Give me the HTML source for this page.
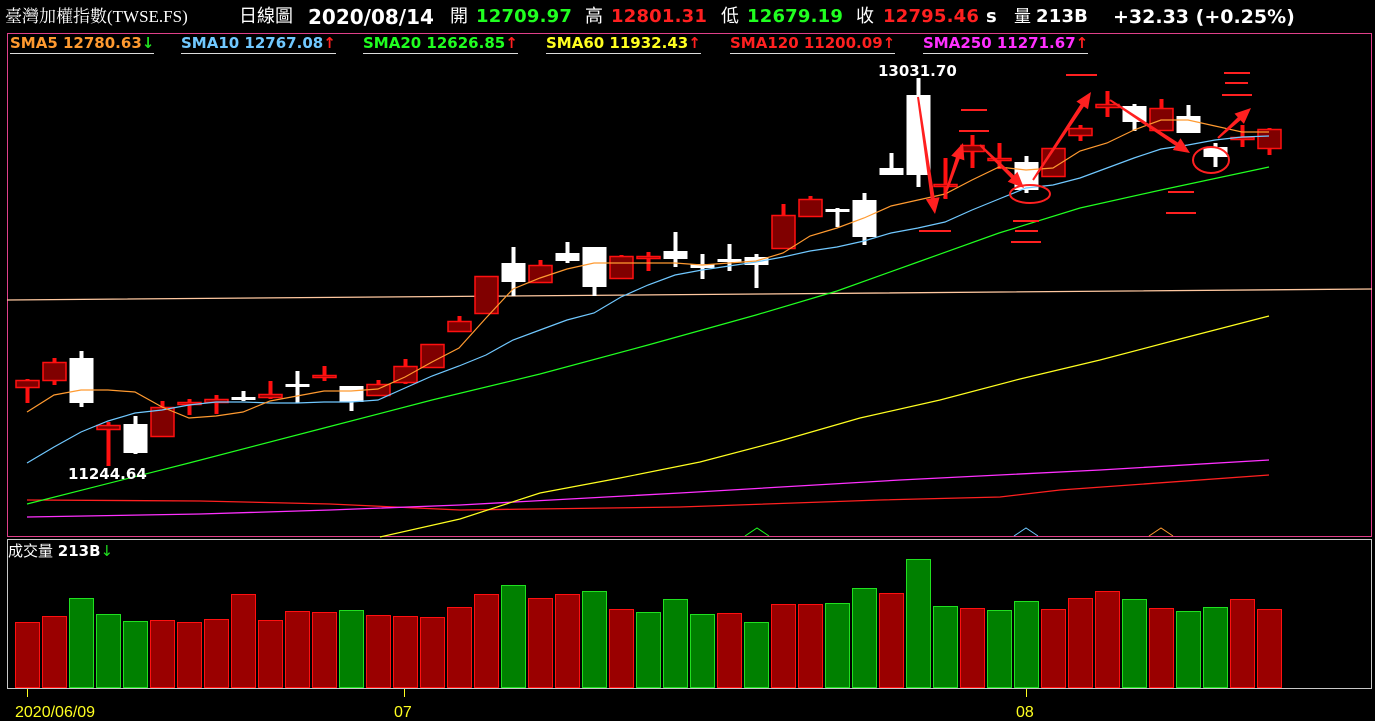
<!DOCTYPE html>
<html><head><meta charset="utf-8"><style>
html,body{margin:0;padding:0;background:#000;width:1375px;height:721px;overflow:hidden;position:relative}
#hdr{position:absolute;left:0;top:0;height:33px;width:1375px;font-family:"DejaVu Sans","Noto Sans CJK TC",sans-serif;color:#fff;z-index:2}
#hdr span{position:absolute;top:5px;font-size:18px;white-space:nowrap;line-height:24px}
.b{font-weight:bold}
.n{font-weight:bold;font-size:18px!important;letter-spacing:0.2px}
.lg{position:absolute;top:35px;font-family:"DejaVu Sans",sans-serif;font-weight:bold;font-size:15px;white-space:nowrap;padding-bottom:1px;z-index:2;line-height:17px}
svg{position:absolute;left:0;top:0;z-index:1}
</style></head><body>
<svg id="s" width="1375" height="721" xmlns="http://www.w3.org/2000/svg">
<rect x="7.5" y="33.5" width="1364" height="503" fill="none" stroke="#e0408a"/>
<rect x="7.5" y="539.5" width="1364" height="149" fill="none" stroke="#c8c8c8"/>
<polyline fill="none" stroke="#ffc8a0" stroke-width="1.3" points="7,300 380,297 760,294 1372,289"/>
<polyline fill="none" stroke="#ff2020" stroke-width="1.3" points="27,500 200,501 330,504 460,510 680,507 880,500 1000,497 1060,490 1269,475"/>
<polyline fill="none" stroke="#ff30ff" stroke-width="1.3" points="27,517 200,514 330,510 460,505 680,493 900,480 1100,470 1269,460"/>
<polyline fill="none" stroke="#ffff20" stroke-width="1.2" points="380,537 460,519 540,493 620,478 700,462 780,441 860,418 940,400 1020,379 1100,360 1180,339 1269,316"/>
<polyline fill="none" stroke="#20ff20" stroke-width="1.2" points="27,504 189,463 324,428 432,400 540,374 648,345 756,315 837,291 918,262 999,233 1080,208 1161,190 1269,167"/>
<g id="c"></g>
<polyline fill="none" stroke="#70c8ff" stroke-width="1.2" points="27,463 54,447 81,432 108,421 135,413 162,410 189,405 216,402 243,402 270,403 297,403 324,402 351,402 378,400 405,388 432,376 459,366 486,355 513,340 540,330 567,320 594,313 621,297 648,285 675,275 702,270 729,266 756,262 783,257 810,251 837,247 864,241 891,233 918,228 945,222 972,210 999,199 1026,188 1053,185 1080,178 1107,168 1134,158 1161,149 1188,145 1215,140 1242,137 1269,136"/>
<polyline fill="none" stroke="#ff9a30" stroke-width="1.2" points="27,412 54,395 81,390 108,390 135,392 162,407 189,418 216,416 243,412 270,401 297,396 324,391 351,391 378,389 405,377 432,362 459,348 486,318 513,289 540,278 567,269 594,263 621,263 648,263 675,263 702,265 729,263 756,261 783,253 810,236 837,228 864,218 891,206 918,200 945,194 972,180 999,167 1026,170 1053,168 1080,151 1107,143 1134,130 1161,120 1188,120 1215,126 1242,132 1269,132"/>
<polyline fill="none" stroke="#20ff20" points="745,536 757,528 769,536"/>
<polyline fill="none" stroke="#70c8ff" points="1014,536 1026,528 1038,536"/>
<polyline fill="none" stroke="#ff9a30" points="1149,536 1161,528 1173,536"/>
<g stroke="#ff2020" stroke-width="2">
<line x1="1066" y1="75" x2="1097" y2="75"/><line x1="961" y1="110" x2="987" y2="110"/><line x1="959" y1="131" x2="989" y2="131"/>
<line x1="919" y1="231" x2="951" y2="231"/><line x1="1013" y1="221" x2="1039" y2="221"/><line x1="1015" y1="231" x2="1038" y2="231"/><line x1="1011" y1="242" x2="1041" y2="242"/>
<line x1="1168" y1="192" x2="1194" y2="192"/><line x1="1166" y1="213" x2="1196" y2="213"/>
<line x1="1224" y1="73" x2="1250" y2="73"/><line x1="1225" y1="83" x2="1248" y2="83"/><line x1="1222" y1="95" x2="1252" y2="95"/>
</g>
<g id="ar" fill="#ff2020"></g>
<ellipse cx="1030" cy="194" rx="20" ry="9" fill="none" stroke="#ff2020" stroke-width="2"/>
<ellipse cx="1211" cy="160" rx="18" ry="13" fill="none" stroke="#ff2020" stroke-width="2"/>
<g font-family="DejaVu Sans,sans-serif" font-weight="bold" font-size="15" fill="#fff">
<text x="68" y="479">11244.64</text>
<text x="878" y="76">13031.70</text>
</g>
<text x="8" y="556" font-family="DejaVu Sans,Noto Sans CJK TC,sans-serif" font-size="15" fill="#fff">成交量 <tspan font-weight="bold">213B</tspan><tspan fill="#20e020">↓</tspan></text>
<g id="v"></g>
<g stroke="#ffff20"><line x1="27.5" y1="689" x2="27.5" y2="697"/><line x1="404.5" y1="689" x2="404.5" y2="697"/><line x1="1026.5" y1="689" x2="1026.5" y2="697"/></g>
<g font-family="Liberation Sans,sans-serif" font-size="16" fill="#ffff20">
<text x="15" y="717">2020/06/09</text><text x="394" y="717">07</text><text x="1016" y="717">08</text>
</g>
</svg>
<div id="hdr">
<span style="left:5px;font-family:'Liberation Serif','Noto Serif CJK SC',serif;font-size:17px">臺灣加權指數(TWSE.FS)</span>
<span style="left:239px">日線圖</span>
<span class="b" style="left:308px;font-size:20px">2020/08/14</span>
<span style="left:450px">開</span><span class="n" style="left:476px;color:#20ff20">12709.97</span>
<span style="left:585px">高</span><span class="n" style="left:611px;color:#ff2020">12801.31</span>
<span style="left:721px">低</span><span class="n" style="left:747px;color:#20ff20">12679.19</span>
<span style="left:856px">收</span><span class="n" style="left:883px;color:#ff2020">12795.46</span>
<span class="b" style="left:986px">s</span>
<span style="left:1014px;font-size:17px">量</span><span class="n" style="left:1036px">213B</span>
<span class="b" style="left:1113px;font-size:19px">+32.33 (+0.25%)</span>
</div>
<div class="lg" style="left:10px;color:#ff9a30;border-bottom:1px solid #ddd">SMA5 12780.63<span style="color:#20e020">↓</span></div>
<div class="lg" style="left:181px;color:#70c8ff;border-bottom:1px solid #ddd">SMA10 12767.08<span style="color:#ff2020">↑</span></div>
<div class="lg" style="left:363px;color:#20ff20;border-bottom:1px solid #ddd">SMA20 12626.85<span style="color:#ff2020">↑</span></div>
<div class="lg" style="left:546px;color:#ffff20;border-bottom:1px solid #ddd">SMA60 11932.43<span style="color:#ff2020">↑</span></div>
<div class="lg" style="left:730px;color:#ff2020;border-bottom:1px solid #ddd">SMA120 11200.09<span style="color:#ff2020">↑</span></div>
<div class="lg" style="left:923px;color:#ff30ff;border-bottom:1px solid #ddd">SMA250 11271.67<span style="color:#ff2020">↑</span></div>
<script>
var C=[[1,380,388,379,403],[1,362,381,358,385],[0,358,403,351,407],[1,425,430,422,466],[0,424,453,416,454],[1,407,437,401,437],[1,402,405,399,415],[1,399,403,395,414],[0,397,400,391,401],[1,394,398,381,399],[0,384,386,371,403],[1,375,378,366,381],[0,386,402,386,411],[1,384,396,380,396],[1,366,383,359,384],[1,344,368,344,368],[1,321,332,316,332],[1,276,314,276,314],[0,263,282,247,296],[1,265,283,260,283],[0,253,261,242,263],[0,247,287,247,296],[1,256,279,255,279],[1,256,259,252,271],[0,251,259,232,267],[0,264,268,254,279],[0,259,261,244,271],[0,257,265,254,288],[1,215,249,204,249],[1,199,217,196,217],[0,209,212,208,227],[0,200,237,193,245],[0,168,175,153,175],[0,95,175,78,187],[1,184,187,158,199],[1,145,152,135,168],[1,158,160,143,169],[0,162,190,156,193],[1,148,177,148,177],[1,128,136,125,141],[1,104,108,91,117],[0,106,122,104,131],[1,108,131,99,131],[0,116,133,105,133],[0,147,157,143,167],[1,137,139,125,147],[1,129,149,128,155]];
var V=[[622,1],[616,1],[598,0],[614,0],[621,0],[620,1],[622,1],[619,1],[594,1],[620,1],[611,1],[612,1],[610,0],[615,1],[616,1],[617,1],[607,1],[594,1],[585,0],[598,1],[594,1],[591,0],[609,1],[612,0],[599,0],[614,0],[613,1],[622,0],[604,1],[604,1],[603,0],[588,0],[593,1],[559,0],[606,0],[608,1],[610,0],[601,0],[609,1],[598,1],[591,1],[599,0],[608,1],[611,0],[607,0],[599,1],[609,1]];
var h="";
C.forEach(function(c,i){var x=27.5+27*i,u=c[0],col=u?"#ff1010":"#fff";
h+='<rect x="'+(x-2)+'" y="'+c[3]+'" width="4" height="'+(c[4]-c[3])+'" fill="'+col+'"/>';
var bh=Math.max(c[2]-c[1],3);
if(u)h+='<rect x="'+(x-11.5)+'" y="'+(c[1]+0.5)+'" width="23" height="'+(bh-1)+'" fill="#800000" stroke="#ff1010" stroke-width="1.5"/>';
else h+='<rect x="'+(x-12)+'" y="'+c[1]+'" width="24" height="'+bh+'" fill="#fff"/>';});
document.getElementById("c").innerHTML=h;h="";
V.forEach(function(v,i){var x=15.5+27*i;h+='<rect x="'+x+'" y="'+(v[0]+0.5)+'" width="24" height="'+(687-v[0])+'" fill="'+(v[1]?"#9a0000":"#008000")+'" stroke="'+(v[1]?"#ff1010":"#20e020")+'"/>';});
document.getElementById("v").innerHTML=h;h="";
function ar(x1,y1,x2,y2){var dx=x2-x1,dy=y2-y1,L=Math.sqrt(dx*dx+dy*dy),ux=dx/L,uy=dy/L,px=-uy,py=ux,hl=16,hw=7,w=2;
var bx=x2-ux*hl,by=y2-uy*hl;
var p=[[x1+px*1,y1+py*1],[bx+px*w,by+py*w],[bx+px*hw,by+py*hw],[x2,y2],[bx-px*hw,by-py*hw],[bx-px*w,by-py*w],[x1-px*1,y1-py*1]];
return '<polygon points="'+p.map(function(q){return q[0].toFixed(1)+","+q[1].toFixed(1)}).join(" ")+'"/>';}
h=ar(918,97,935,214)+ar(944,198,963,143)+ar(980,145,1024,188)+ar(1033,180,1091,92)+ar(1110,100,1190,153)+ar(1218,138,1251,108);
document.getElementById("ar").innerHTML=h;
</script>
</body></html>
